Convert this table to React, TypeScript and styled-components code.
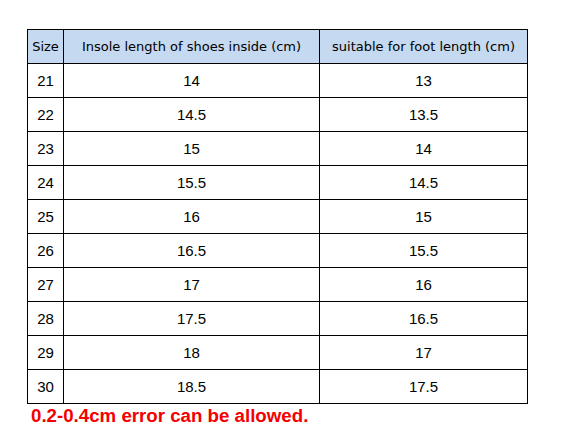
import React from 'react'
import styled, { createGlobalStyle } from 'styled-components'

const GlobalStyle = createGlobalStyle`
  html, body {
    margin: 0;
    padding: 0;
    background: #ffffff;
  }
`;

const Page = styled.div`
  width: 580px;
  height: 432px;
  padding: 29px 0 0 27px;
  box-sizing: border-box;
  background: #ffffff;
`;

const Table = styled.table`
  border-collapse: collapse;
  table-layout: fixed;
  width: 501px;
`;

const HeadCell = styled.th<{ $w: number }>`
  width: ${p => p.$w}px;
  height: 34px;
  padding: 0;
  border: 1px solid #000;
  background: #c5d9f1;
  font-family: "DejaVu Sans", "Liberation Sans", sans-serif;
  font-size: 13px;
  font-weight: 400;
  color: #000;
  text-align: center;
  white-space: nowrap;
  box-sizing: border-box;
`;

const Cell = styled.td`
  height: 34px;
  padding: 0;
  border: 1px solid #000;
  font-family: "Liberation Sans", Arial, sans-serif;
  font-size: 15px;
  color: #000;
  text-align: center;
  box-sizing: border-box;
`;

const Note = styled.p`
  margin: 1px 0 0 4px;
  font-family: "Liberation Sans", Arial, sans-serif;
  font-size: 18.7px;
  font-weight: 700;
  color: #f50000;
`;

const rows: [number, string, string][] = [
  [21, '14', '13'],
  [22, '14.5', '13.5'],
  [23, '15', '14'],
  [24, '15.5', '14.5'],
  [25, '16', '15'],
  [26, '16.5', '15.5'],
  [27, '17', '16'],
  [28, '17.5', '16.5'],
  [29, '18', '17'],
  [30, '18.5', '17.5'],
]

const App = () => {
  return (
    <>
      <GlobalStyle />
      <Page>
        <Table>
          <thead>
            <tr>
              <HeadCell $w={36}>Size</HeadCell>
              <HeadCell $w={256}>Insole length of shoes inside (cm)</HeadCell>
              <HeadCell $w={208}>suitable for foot length (cm)</HeadCell>
            </tr>
          </thead>
          <tbody>
            {rows.map(([size, insole, foot]) => (
              <tr key={size}>
                <Cell>{size}</Cell>
                <Cell>{insole}</Cell>
                <Cell>{foot}</Cell>
              </tr>
            ))}
          </tbody>
        </Table>
        <Note>0.2-0.4cm error can be allowed.</Note>
      </Page>
    </>
  )
}

export default App
